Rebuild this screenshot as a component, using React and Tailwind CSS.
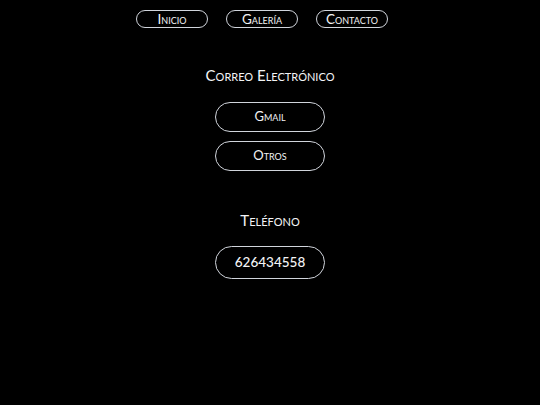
import React from 'react';

const NavButton = ({ children }) => (
  <a
    href="#"
    className="flex h-[18px] w-[72px] items-center justify-center rounded-full border border-gray-300 pt-[1px] text-[13.5px] leading-none text-gray-100 [font-variant:small-caps]"
  >
    {children}
  </a>
);

const PillButton = ({ children, className = '' }) => (
  <a
    href="#"
    className={`flex w-[110px] items-center justify-center rounded-full border border-gray-300 text-gray-100 ${className}`}
  >
    {children}
  </a>
);

export default function App() {
  return (
    <div className="min-h-[405px] w-full bg-black font-['Lato',sans-serif] text-gray-100">
      {/* Nav */}
      <nav className="flex justify-center gap-[18px] pr-[16px] pt-[10px]">
        <NavButton>Inicio</NavButton>
        <NavButton>Galería</NavButton>
        <NavButton>Contacto</NavButton>
      </nav>

      {/* Correo */}
      <section className="mt-[40px] flex flex-col items-center">
        <h2 className="text-[15px] leading-none [font-variant:small-caps]">Correo Electrónico</h2>
        <div className="mt-[19px] flex flex-col items-center gap-[9px]">
          <PillButton className="h-[30px] text-[13px] [font-variant:small-caps]">Gmail</PillButton>
          <PillButton className="h-[30px] text-[13px] [font-variant:small-caps]">Otros</PillButton>
        </div>
      </section>

      {/* Teléfono */}
      <section className="mt-[42px] flex flex-col items-center">
        <h2 className="text-[15px] leading-none [font-variant:small-caps]">Teléfono</h2>
        <div className="mt-[18px]">
          <PillButton className="h-[33px] text-[13.5px] font-medium">626434558</PillButton>
        </div>
      </section>
    </div>
  );
}
